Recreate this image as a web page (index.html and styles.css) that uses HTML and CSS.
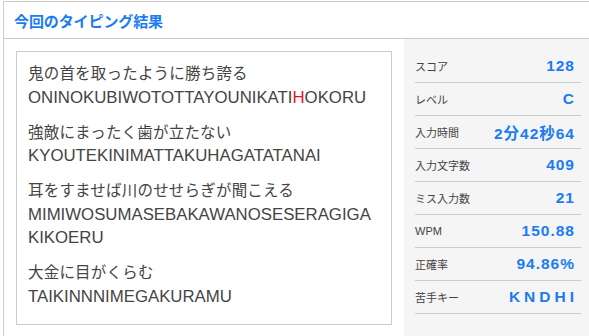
FILE: index.html
```html
<!DOCTYPE html>
<html lang="ja">
<head>
<meta charset="utf-8">
<title>今回のタイピング結果</title>
<link rel="stylesheet" href="styles.css">
</head>
<body>
<section class="card">
  <h2 class="card-title">今回のタイピング結果</h2>
  <div class="card-body">
    <div class="words">
      <p class="word"><span class="jp">鬼の首を取ったように勝ち誇る</span><span class="roma">ONINOKUBIWOTOTTAYOUNIKATI<span class="miss">H</span>OKORU</span></p>
      <p class="word"><span class="jp">強敵にまったく歯が立たない</span><span class="roma">KYOUTEKINIMATTAKUHAGATATANAI</span></p>
      <p class="word"><span class="jp">耳をすませば川のせせらぎが聞こえる</span><span class="roma">MIMIWOSUMASEBAKAWANOSESERAGIGAKIKOERU</span></p>
      <p class="word"><span class="jp">大金に目がくらむ</span><span class="roma">TAIKINNNIMEGAKURAMU</span></p>
    </div>
    <dl class="stats">
      <div class="stat"><dt>スコア</dt><dd>128</dd></div>
      <div class="stat"><dt>レベル</dt><dd>C</dd></div>
      <div class="stat"><dt>入力時間</dt><dd>2分42秒64</dd></div>
      <div class="stat"><dt>入力文字数</dt><dd>409</dd></div>
      <div class="stat"><dt>ミス入力数</dt><dd>21</dd></div>
      <div class="stat"><dt>WPM</dt><dd>150.88</dd></div>
      <div class="stat"><dt>正確率</dt><dd>94.86%</dd></div>
      <div class="stat"><dt>苦手キー</dt><dd class="keys">KNDHI</dd></div>
    </dl>
  </div>
</section>
</body>
</html>
```

FILE: styles.css
```css
html, body {
  margin: 0;
  padding: 0;
  background: #fff;
  overflow: hidden;
}
body {
  font-family: "Liberation Sans", "Noto Sans CJK JP", sans-serif;
  color: #444;
}
.card {
  margin: 1px 0 0 3px;
  width: 586px;
  border: 1px solid #ccc;
  border-right: none;
  box-sizing: border-box;
}
.card-title {
  margin: 0;
  height: 36px;
  padding-left: 10px;
  display: flex;
  align-items: center;
  font-size: 15px;
  font-weight: bold;
  color: #1a7cf2;
  border-bottom: 1px solid #ccc;
  letter-spacing: -0.1px;
}
.card-body {
  display: flex;
  align-items: stretch;
  gap: 12px;
  padding-left: 12px;
}
.words {
  flex: 0 0 auto;
  margin: 12px 0;
  width: 376px;
  height: 274px;
  box-sizing: border-box;
  border: 1px solid #ccc;
  padding: 10px 15px 0 11px;
}
.word {
  margin: 0 0 11.5px;
  font-size: 16px;
  line-height: 23.5px;
  word-break: break-all;
}
.jp, .roma {
  display: block;
}
.jp {
  font-size: 15.5px;
  letter-spacing: 0.2px;
}
.roma {
  font-size: 16.8px;
}
.miss {
  color: #e8141e;
}
.stats {
  flex: 1 1 auto;
  margin: 0;
  background: #f5f5f5;
  padding: 11px 8px 0 11px;
}
.stat {
  display: flex;
  justify-content: space-between;
  align-items: center;
  height: 32px;
  border-bottom: 1px solid #ccc;
  padding-right: 7px;
}
.stat dt {
  font-size: 11px;
  color: #444;
}
.stat dd {
  margin: 0;
  font-size: 15.5px;
  font-weight: bold;
  color: #1a7cf2;
  letter-spacing: 1px;
  margin-right: -1px;
}
.stat dd.keys {
  letter-spacing: 4px;
  margin-right: -4px;
}
```
